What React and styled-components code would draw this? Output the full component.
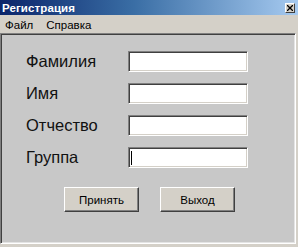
import { Fragment } from "react";
import styled, { createGlobalStyle } from "styled-components";

const GlobalStyle = createGlobalStyle`
  body {
    margin: 0;
    background: #d4d0c8;
    font-family: "Liberation Sans", Arial, sans-serif;
  }
`;

const Window = styled.div`
  width: 298px;
  height: 247px;
  display: flex;
  flex-direction: column;
  background: #d4d0c8;
  overflow: hidden;
`;

const TitleBar = styled.div`
  height: 15px;
  display: flex;
  align-items: center;
  justify-content: space-between;
  padding: 0 3px 0 2px;
  background: linear-gradient(to right, #0a246a 0%, #3a6ea5 45%, #a6caf0 100%);
`;

const Title = styled.span`
  color: #fff;
  font-weight: bold;
  font-size: 11.5px;
  letter-spacing: 0.1px;
`;

const CloseButton = styled.div`
  width: 10px;
  height: 10px;
  display: flex;
  align-items: center;
  justify-content: center;
  background: #d4d0c8;
  border: 1px solid;
  border-color: #fff #404040 #404040 #fff;
  box-sizing: border-box;
`;

const MenuBar = styled.div`
  height: 18px;
  display: flex;
  align-items: center;
  gap: 13px;
  padding: 2px 0 0 5px;
  box-sizing: border-box;
  font-size: 11.5px;
  color: #000;
`;

const Panel = styled.div`
  flex: 1;
  margin: 0 2px 3px 0;
  background: #c8c8c8;
  border: 1px solid;
  border-color: #808080 #fff #fff #808080;
  box-shadow: inset 1px 1px #404040, inset -1px -1px #e4e4e4;
  display: flex;
  flex-direction: column;
`;

const Form = styled.div`
  display: grid;
  grid-template-columns: 102px 120px;
  row-gap: 11px;
  padding: 17px 0 0 25px;
  align-items: center;
`;

const Label = styled.span`
  font-size: 16.5px;
  color: #111;
`;

const Field = styled.div`
  height: 21px;
  box-sizing: border-box;
  background: #fff;
  border: 1px solid;
  border-color: #808080 #fff #fff #808080;
  box-shadow: inset 1px 1px #404040, inset -1px -1px #d4d0c8;
  display: flex;
  align-items: center;
  padding-left: 2px;
`;

const Caret = styled.span`
  width: 1px;
  height: 14px;
  background: #000;
`;

const Buttons = styled.div`
  display: flex;
  gap: 21px;
  padding: 19px 0 0 63px;
`;

const Button = styled.div`
  width: 75px;
  height: 25px;
  box-sizing: border-box;
  display: flex;
  align-items: center;
  justify-content: center;
  background: #d4d0c8;
  border: 1px solid;
  border-color: #fff #404040 #404040 #fff;
  box-shadow: inset -1px -1px #808080;
  font-size: 11.5px;
  color: #000;
`;

const fields = ["Фамилия", "Имя", "Отчество", "Группа"];

export default function App() {
  return (
    <Window>
      <GlobalStyle />
      <TitleBar>
        <Title>Регистрация</Title>
        <CloseButton>
          <svg width="6" height="6" viewBox="0 0 6 6">
            <path d="M0 0L6 6M6 0L0 6" stroke="#000" strokeWidth="1.3" />
          </svg>
        </CloseButton>
      </TitleBar>
      <MenuBar>
        <span>Файл</span>
        <span>Справка</span>
      </MenuBar>
      <Panel>
        <Form>
          {fields.map((name, i) => (
            <Fragment key={name}>
              <Label>{name}</Label>
              <Field>{i === 3 && <Caret />}</Field>
            </Fragment>
          ))}
        </Form>
        <Buttons>
          <Button>Принять</Button>
          <Button>Выход</Button>
        </Buttons>
      </Panel>
    </Window>
  );
}
